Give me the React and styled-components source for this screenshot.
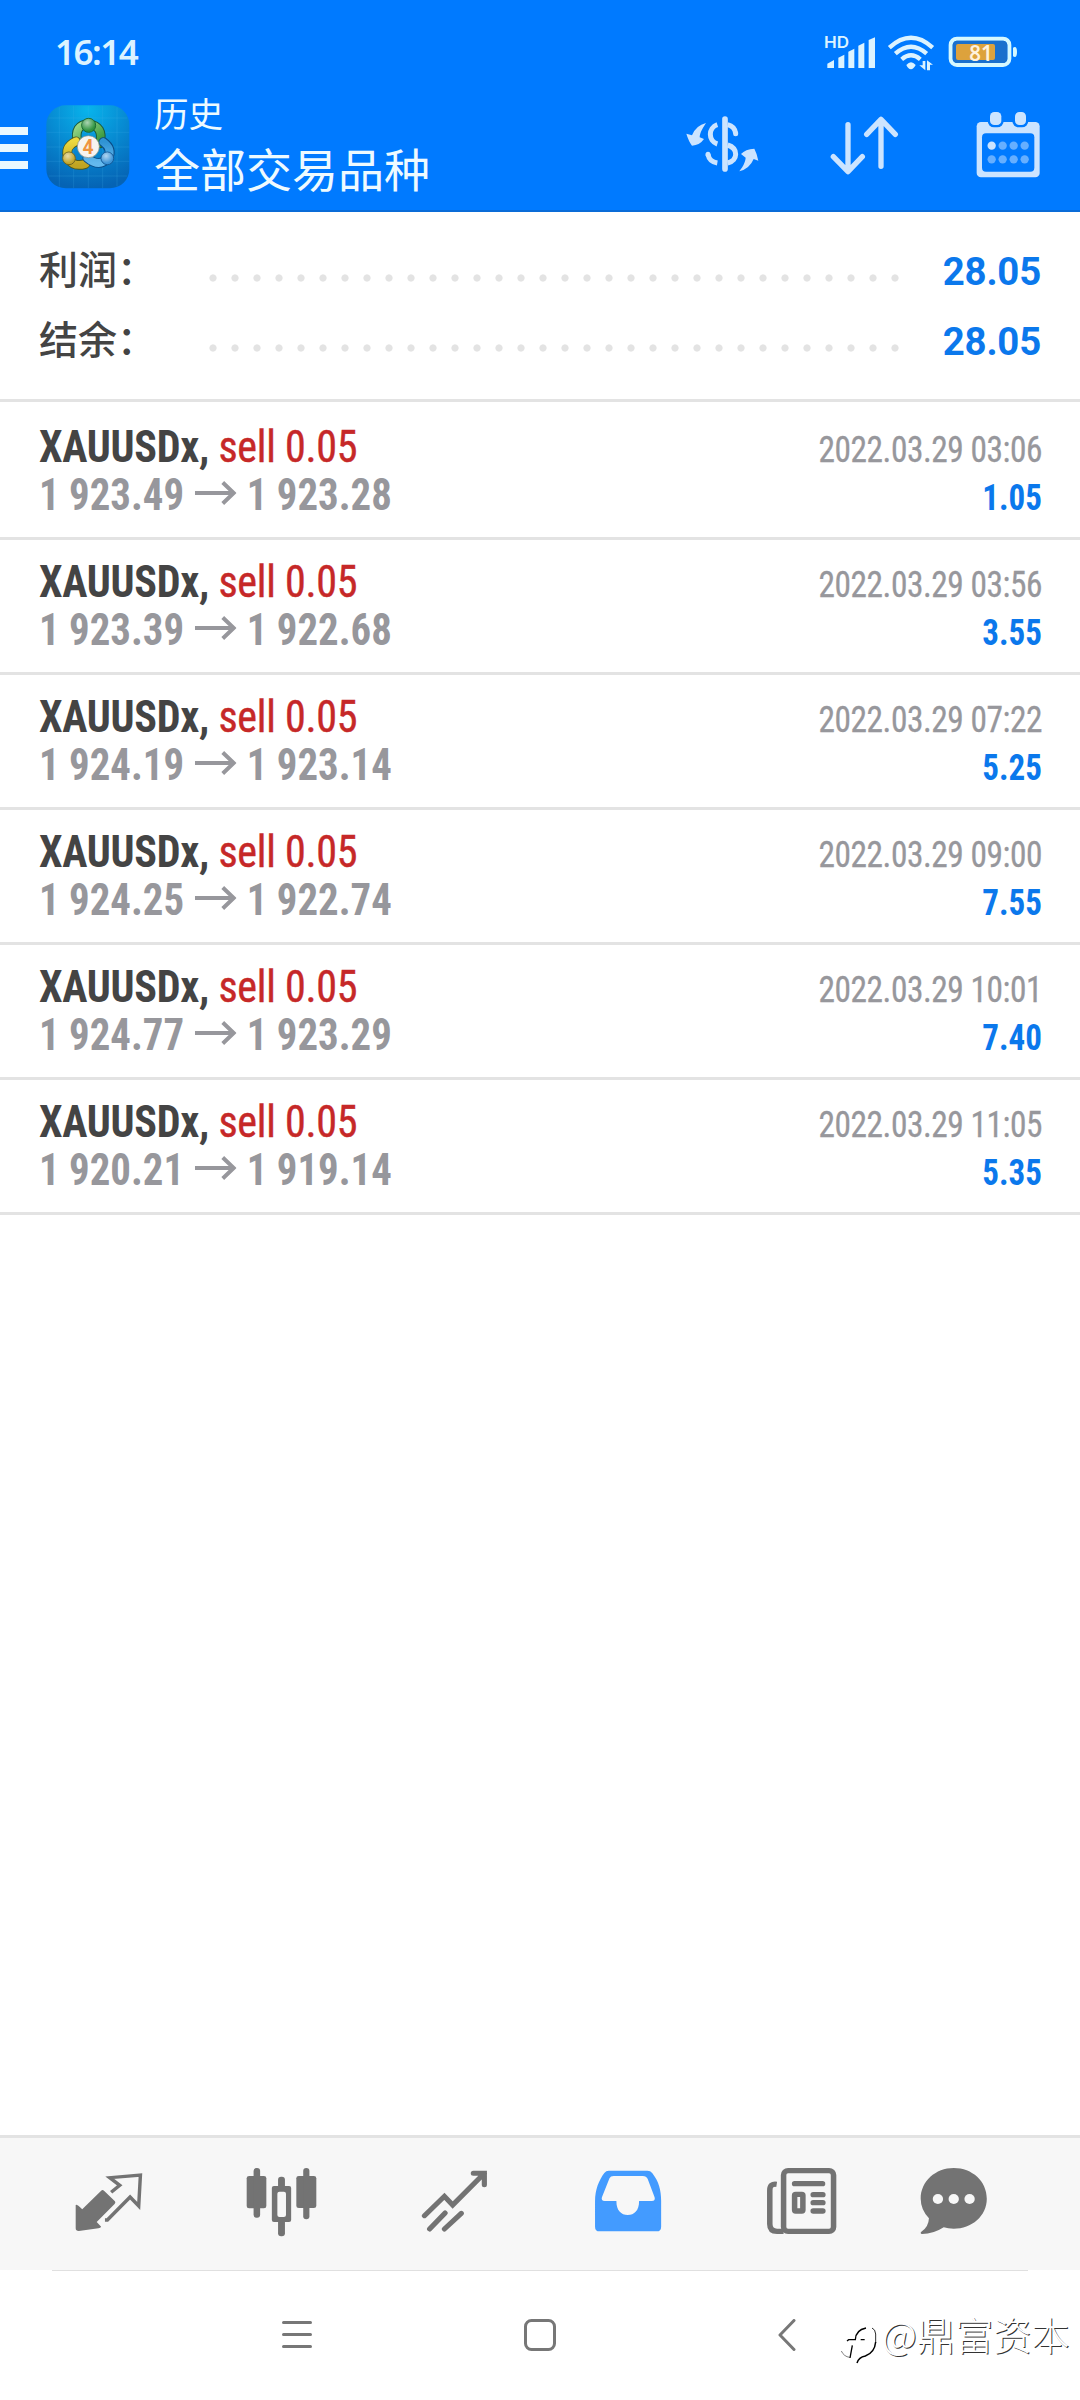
import React from 'react';
import styled, { createGlobalStyle } from 'styled-components';

const GlobalStyle = createGlobalStyle`
  * {
    box-sizing: border-box;
  }

  body {
    margin: 0;
    background: #fff;
    font-family: Roboto, 'Noto Sans CJK SC', sans-serif;
  }

  svg {
    display: block;
  }
`;

const Screen = styled.div`
  position: relative;
  display: flex;
  flex-direction: column;
  width: 1080px;
  height: 2400px;
  background: #fff;
  overflow: hidden;
`;

const Top = styled.header`
  height: 212px;
  background: #007aff;
  border-bottom: 2px solid #0a6cd8;
`;

const StatusBar = styled.div`
  display: flex;
  align-items: flex-start;
  justify-content: space-between;
  height: 94px;
  padding: 30px 62px 0 55px;
`;

const Clock = styled.span`
  color: #dcf3ff;
  font-family: 'Noto Sans', sans-serif;
  font-size: 35px;
  font-weight: 600;
  line-height: 44px;
  letter-spacing: -1.5px;
`;

const TitleBar = styled.div`
  display: flex;
  height: 116px;
`;

const MenuButton = styled.div`
  display: flex;
  flex-direction: column;
  gap: 9px;
  width: 28px;
  margin: 33px 18px 0 0;
`;

const MenuLine = styled.span`
  height: 8px;
  background: #e9f8ff;
`;

const Logo = styled.svg`
  width: 84px;
  height: 84px;
  margin-top: 10.5px;
`;

const Titles = styled.div`
  flex: 1;
  padding-left: 24px;
  color: #eefaff;
  white-space: nowrap;
`;

const Subtitle = styled.div`
  font-size: 34.6px;
  line-height: 42px;
`;

const PageTitle = styled.div`
  margin-top: 6px;
  font-size: 46px;
  line-height: 58px;
`;

const Actions = styled.div`
  display: flex;
  align-items: flex-start;
  padding: 21px 40px 0 0;
`;

const Summary = styled.section`
  height: 190px;
  padding: 25px 39px 0;
  border-bottom: 3px solid #e3e3e3;
`;

const SummaryRow = styled.div`
  display: flex;
  align-items: center;
  height: 70px;
`;

const SummaryLabel = styled.span`
  align-self: flex-start;
  width: 171px;
  color: #444;
  font-family: 'Noto Sans CJK SC', sans-serif;
  font-size: 39px;
  font-weight: 500;
  line-height: 61px;
`;

const Dots = styled.span`
  width: 704px;
  height: 8px;
  margin-top: 12px;
  margin-left: -8px;
  background: radial-gradient(circle at center, #e3e3e3 3.2px, transparent 4px) 0 0 / 22px 8px;
`;

const SummaryValue = styled.strong`
  flex: 1;
  margin-top: -2px;
  color: #0b78ec;
  font-size: 38.4px;
  font-weight: 700;
  letter-spacing: -0.2px;
  text-align: right;
`;

const Deals = styled.main`
  flex: 1;
  padding-top: 3px;
`;

const Deal = styled.article`
  display: flex;
  justify-content: space-between;
  height: 135px;
  padding: 18px 38px 0 39px;
  border-bottom: 3px solid #e3e3e3;
`;

const Column = styled.div`
  text-align: ${({ $end }) => ($end ? 'right' : 'left')};
`;

const Line = styled.div`
  height: 48px;
  font-family: 'Roboto Condensed', Roboto, sans-serif;
  font-stretch: 75%;
  font-size: 44px;
  line-height: 48px;
  white-space: pre;
  transform: scaleX(${({ $narrow }) => $narrow});
  transform-origin: ${({ $end }) => ($end ? 'right' : 'left')} center;
`;

const Symbol = styled.span`
  color: #444;
  font-weight: 700;
  letter-spacing: -0.3px;
`;

const Side = styled.span`
  color: #c62828;
  letter-spacing: -0.3px;
  -webkit-text-stroke: 0.4px #c62828;
`;

const Price = styled.span`
  color: #97979c;
  font-weight: 700;
`;

const Arrow = styled.svg`
  display: inline-block;
  width: 45px;
  height: 24px;
  margin: 0 10.5px 0 12px;
  vertical-align: 5px;
`;

const Time = styled.span`
  color: #97979c;
  font-size: 36.6px;
  letter-spacing: -0.5px;
  -webkit-text-stroke: 0.3px #97979c;
`;

const Profit = styled.span`
  color: #0b78ec;
  font-size: 36.6px;
  font-weight: 700;
`;

const Tabs = styled.nav`
  display: flex;
  height: 135px;
  padding-left: 75px;
  background: #f7f7f7;
  border-top: 3px solid #e3e3e3;
`;

const SystemBar = styled.div`
  display: flex;
  height: 130px;
  margin: 0 52px;
  padding-left: 230px;
  border-top: 1px solid #e0e0e0;
`;

const Glyph = styled.svg`
  flex: none;
  width: ${({ $w }) => $w}px;
  height: ${({ $h }) => $h}px;
  margin-top: ${({ $top = 0 }) => $top}px;
  margin-left: ${({ $left = 0 }) => $left}px;
`;

const Watermark = styled.div`
  position: absolute;
  left: 840px;
  top: 2304px;
  display: flex;
  gap: 4px;
  color: #fff;
  font-family: 'Noto Sans CJK SC', sans-serif;
  font-size: 38.2px;
  font-weight: 300;
  line-height: 60px;
  text-shadow: 1px 1px 0 #333;
  white-space: nowrap;
`;

const deals = [
  { open: '1 923.49', close: '1 923.28', time: '2022.03.29 03:06', profit: '1.05' },
  { open: '1 923.39', close: '1 922.68', time: '2022.03.29 03:56', profit: '3.55' },
  { open: '1 924.19', close: '1 923.14', time: '2022.03.29 07:22', profit: '5.25' },
  { open: '1 924.25', close: '1 922.74', time: '2022.03.29 09:00', profit: '7.55' },
  { open: '1 924.77', close: '1 923.29', time: '2022.03.29 10:01', profit: '7.40' },
  { open: '1 920.21', close: '1 919.14', time: '2022.03.29 11:05', profit: '5.35' },
];

const StatusIcons = () => (
  <Glyph $w={197} $h={46} $top={-4} viewBox="543 78 591 138">
    <g fill="#dcf3ff">
      <text x="552" y="144" fontFamily="Inter, sans-serif" fontSize="49" fontWeight="600" textLength="75" lengthAdjust="spacingAndGlyphs">HD</text>
      <path d="M562 191l20-11v24h-20zM595 173l18-9v40h-18zM625 155l18-9v58h-18zM655 137l18-9v76h-18zM686 120l19-8v92h-19z" />
      <path d="M799 195q14-17 28 0q-6 12-14 13q-9-1-14-13z" />
      <path d="M848 183h8v28l-18-15h10zM861 211h9v-17h9l-18-13z" />
    </g>
    <g fill="none" stroke="#dcf3ff" strokeWidth="13">
      <path d="M748 143q65-59 130 0M766 161q47-42 94 0M785 178q28-24 56 0" />
      <rect x="932" y="116" width="176" height="79" rx="19" stroke="#d5f8ff" strokeWidth="12" />
    </g>
    <rect x="938" y="122" width="164" height="67" rx="13" fill="#1a70cd" />
    <rect x="948" y="132" width="117" height="48" rx="6" fill="#dda23c" />
    <path d="M1119 143q12-7 12 13t-12 13z" fill="#d5f8ff" />
    <text x="988" y="182" fill="#fff1dc" fontFamily="'Noto Sans', sans-serif" fontSize="66" fontWeight="600" textLength="70" lengthAdjust="spacingAndGlyphs">81</text>
  </Glyph>
);

const AppLogo = () => (
  <Logo viewBox="138 313 252 252">
    <defs>
      <radialGradient id="tile" cx="50%" cy="5%" r="95%">
        <stop offset="0" stopColor="#08b4ec" />
        <stop offset="0.55" stopColor="#0786cf" />
        <stop offset="1" stopColor="#0563b4" />
      </radialGradient>
      <linearGradient id="green" x1="0" y1="0" x2="1" y2="1">
        <stop offset="0" stopColor="#9bd98a" />
        <stop offset="1" stopColor="#2f9238" />
      </linearGradient>
      <linearGradient id="yellow" x1="0" y1="0" x2="0" y2="1">
        <stop offset="0" stopColor="#ecd83e" />
        <stop offset="1" stopColor="#c0a422" />
      </linearGradient>
      <linearGradient id="blue" x1="0" y1="0" x2="0" y2="1">
        <stop offset="0" stopColor="#2f93d4" />
        <stop offset="1" stopColor="#63b9ee" />
      </linearGradient>
      <radialGradient id="shine" cx="40%" cy="30%" r="60%">
        <stop offset="0" stopColor="#fff" stopOpacity="0.6" />
        <stop offset="1" stopColor="#fff" stopOpacity="0" />
      </radialGradient>
    </defs>
    <rect x="139" y="314" width="249" height="249" rx="58" fill="url(#tile)" />
    <path d="M178 320V558M221 315V562M265 315V562M308 315V562M351 320V558M146 352H382M140 395H388M140 439H388M140 482H388M146 526H382" stroke="#46b4ea" strokeOpacity="0.3" strokeWidth="2" />
    <g strokeWidth="23" fill="none" strokeLinecap="round">
      <path d="M232 424Q222 372 265 370Q312 376 300 428" stroke="#1c5a3a" strokeWidth="29" />
      <path d="M232 424Q222 372 265 370Q312 376 300 428" stroke="url(#green)" />
      <path d="M228 422Q190 440 206 476Q222 500 256 490" stroke="#4d5a20" strokeWidth="29" />
      <path d="M228 422Q190 440 206 476Q222 500 256 490" stroke="url(#yellow)" />
      <path d="M310 424Q338 444 325 472Q298 502 262 472" stroke="#0b4c86" strokeWidth="29" />
      <path d="M310 424Q338 444 325 472Q298 502 262 472" stroke="url(#blue)" />
    </g>
    <circle cx="266" cy="374" r="21" fill="#2f9440" stroke="#1c6a34" strokeWidth="3" />
    <circle cx="207" cy="473" r="19" fill="#c3a62a" stroke="#6f6420" strokeWidth="3" />
    <circle cx="322" cy="473" r="19" fill="#3d95d8" stroke="#145a98" strokeWidth="3" />
    <circle cx="266" cy="374" r="20" fill="url(#shine)" />
    <circle cx="207" cy="473" r="18" fill="url(#shine)" />
    <circle cx="322" cy="473" r="18" fill="url(#shine)" />
    <circle cx="265" cy="438" r="33" fill="#f6f3f0" stroke="#7d8a80" strokeWidth="2" />
    <text x="264" y="459" textAnchor="middle" fontFamily="Roboto, sans-serif" fontSize="58" fontWeight="700" fill="#ef9440">4</text>
  </Logo>
);

const CurrencyIcon = () => (
  <Glyph $w={74} $h={58} viewBox="137 346 222 174">
    <g fill="none" stroke="#cce4ff" strokeWidth="15">
      <path d="M254 358V508" strokeWidth="17" strokeLinecap="round" />
      <path d="M231 375C203 384 203 424 231 433M203 464Q207 486 231 490" />
      <path d="M262 375Q283 380 286 401M262 436C294 446 294 482 262 490" />
      <path d="M203 464v1M286 401v1" strokeLinecap="round" />
    </g>
    <path d="M197 370C185 388 178 402 178 413L191 418Q178 437 155 438Q145 425 138 402L155 407Q167 377 197 370z" fill="#cce4ff" />
    <path d="M297 515C310 498 315 486 316 474L302 463Q315 448 342 447Q350 462 354 483L340 478Q328 507 297 515z" fill="#cce4ff" />
  </Glyph>
);

const SortIcon = () => (
  <Glyph $w={70} $h={60} $left={69} viewBox="569 345 210 180">
    <path d="M626 374V514M582 470L626 515L669 470M725 499V358M682 403L725 358L768 403" fill="none" stroke="#cce4ff" strokeWidth="16" strokeLinecap="round" strokeLinejoin="round" />
  </Glyph>
);

const CalendarIcon = () => (
  <Glyph $w={64} $h={67} $top={-4} $left={77} viewBox="1009 333 192 201">
    <rect x="1011" y="366" width="189" height="166" rx="13" fill="#cce4ff" />
    <rect x="1027" y="400" width="157" height="115" rx="12" fill="#007aff" />
    <rect x="1044" y="328" width="48" height="54" rx="19" fill="#007aff" />
    <rect x="1118" y="328" width="48" height="54" rx="19" fill="#007aff" />
    <rect x="1051" y="336" width="34" height="39" rx="13" fill="#cce4ff" />
    <rect x="1126" y="336" width="33" height="39" rx="13" fill="#cce4ff" />
    {[437, 478].map((y) => [1056, 1089, 1122, 1155].map((x) => (
      <circle key={`${x}-${y}`} cx={x} cy={y} r="12.5" fill={x === 1056 && y === 437 ? '#cce4ff' : '#66afff'} />
    )))}
  </Glyph>
);

const QuotesIcon = () => (
  <Glyph $w={68} $h={60} $top={34} viewBox="217 156 197.5 180" preserveAspectRatio="none">
    <path d="M219 255Q222 252 238 268L293 212Q297 208 302 213L333 244Q336 248 332 252L280 306L293 320Q291 324 285 325L228 333Q219 333 219 325z" fill="#737373" />
    <path d="M322 217L347 196L318 173L407 165L402 258L377 231L311 300L304 300" fill="none" stroke="#737373" strokeWidth="10" strokeLinejoin="miter" />
  </Glyph>
);

const ChartIcon = () => (
  <Glyph $w={71} $h={70} $top={29} $left={103} viewBox="713 141 206 210" preserveAspectRatio="none">
    <g fill="#737373">
      <rect x="715" y="168" width="57" height="97" rx="7" />
      <rect x="735" y="144" width="19" height="149" rx="9" />
      <rect x="859" y="168" width="58" height="96" rx="7" />
      <rect x="879" y="144" width="18" height="154" rx="9" />
      <rect x="806" y="170" width="20" height="179" rx="9" />
      <rect x="788" y="198" width="56" height="108" rx="6" />
    </g>
    <rect x="804" y="215" width="25" height="76" rx="6" fill="#f7f7f7" />
  </Glyph>
);

const TradeIcon = () => (
  <Glyph $w={68} $h={64} $top={31} $left={104} viewBox="1221 147 197.5 192" preserveAspectRatio="none">
    <path d="M1231 287L1289 229L1313 255L1405 160M1373 160H1405V194M1246 327L1291 279M1289 327L1338 280" fill="none" stroke="#737373" strokeWidth="15" strokeLinecap="round" />
  </Glyph>
);

const HistoryIcon = () => (
  <Glyph $w={68} $h={64} $top={31} $left={105} viewBox="155 147 197.5 192" preserveAspectRatio="none">
    <path fillRule="evenodd" d="M198 152H310Q319 152 324 159C343 184 350 210 350 243V320Q350 334 337 334H171Q158 334 158 320V243C158 210 169 181 185 159Q190 152 198 152zM212 168Q203 168 200 175L178 232Q175 243 186 243H220C220 272 234 285 253 285S286 272 286 243H323Q334 243 331 232L311 177Q307 168 297 168z" fill="#439bff" />
  </Glyph>
);

const NewsIcon = () => (
  <Glyph $w={71} $h={70} $top={29} $left={104} viewBox="655 141 206 210" preserveAspectRatio="none">
    <g fill="none" stroke="#737373">
      <rect x="706" y="152" width="145" height="182" rx="13" strokeWidth="16" />
      <path d="M686 193Q666 190 666 211V312Q666 334 687 334H706" strokeWidth="16" />
      <path d="M738 191H819M792 224H820M792 248H820M792 273H820" strokeWidth="16" strokeLinecap="round" />
      <rect x="738" y="223" width="24" height="50" rx="3" strokeWidth="16" />
    </g>
  </Glyph>
);

const ChatIcon = () => (
  <Glyph $w={68} $h={68} $top={29} $left={83} viewBox="1101 141 197.5 204" preserveAspectRatio="none">
    <path d="M1199 144C1253 144 1295 184 1295 236S1251 326 1199 326Q1182 326 1170 322Q1140 342 1107 342Q1101 341 1104 336Q1126 322 1127 295Q1103 268 1103 236C1103 184 1146 144 1199 144z" fill="#737373" />
    <g fill="#f7f7f7">
      <circle cx="1153" cy="237" r="15" />
      <circle cx="1199" cy="237" r="15" />
      <circle cx="1245" cy="237" r="15" />
    </g>
  </Glyph>
);

const WatermarkIcon = () => (
  <Glyph $w={38} $h={40} $top={22} viewBox="30 78 114 120">
    <g fill="none" stroke="#000">
      <path d="M34 153Q42 170 59 172" strokeWidth="1.5" />
      <path d="M60 174L67 136M51 123L56 119H76Q77 90 108 84M92 119H104" strokeWidth="4" />
      <path d="M126 84Q136 88 137 102V128" strokeWidth="2.5" />
      <path d="M137 126Q134 158 106 168Q86 172 81 189" strokeWidth="4.5" />
    </g>
  </Glyph>
);

const SummaryLine = ({ label, value }) => (
  <SummaryRow>
    <SummaryLabel>{label}</SummaryLabel>
    <Dots />
    <SummaryValue>{value}</SummaryValue>
  </SummaryRow>
);

const DealRow = ({ deal }) => (
  <Deal>
    <Column>
      <Line $narrow={0.957}>
        <Symbol>XAUUSDx, </Symbol>
        <Side>sell 0.05</Side>
      </Line>
      <Line $narrow={0.928}>
        <Price>{deal.open}</Price>
        <Arrow viewBox="0 0 42 24" preserveAspectRatio="none">
          <path d="M0 12H38M28 1.5L39 12L28 22.5" fill="none" stroke="#97979c" strokeWidth="4" />
        </Arrow>
        <Price>{deal.close}</Price>
      </Line>
    </Column>
    <Column $end>
      <Line $end $narrow={0.912}><Time>{deal.time}</Time></Line>
      <Line $end $narrow={0.903}><Profit>{deal.profit}</Profit></Line>
    </Column>
  </Deal>
);

const App = () => (
  <Screen>
    <GlobalStyle />
    <Top>
      <StatusBar>
        <Clock>16:14</Clock>
        <StatusIcons />
      </StatusBar>
      <TitleBar>
        <MenuButton>
          <MenuLine />
          <MenuLine />
          <MenuLine />
        </MenuButton>
        <AppLogo />
        <Titles>
          <Subtitle>历史</Subtitle>
          <PageTitle>全部交易品种</PageTitle>
        </Titles>
        <Actions>
          <CurrencyIcon />
          <SortIcon />
          <CalendarIcon />
        </Actions>
      </TitleBar>
    </Top>

    <Summary>
      <SummaryLine label="利润：" value="28.05" />
      <SummaryLine label="结余：" value="28.05" />
    </Summary>

    <Deals>
      {deals.map((deal) => <DealRow key={deal.time} deal={deal} />)}
    </Deals>

    <Tabs>
      <QuotesIcon />
      <ChartIcon />
      <TradeIcon />
      <HistoryIcon />
      <NewsIcon />
      <ChatIcon />
    </Tabs>

    <SystemBar>
      <Glyph $w={30} $h={30} $top={49} viewBox="0 0 30 30">
        <path d="M1.5 2.5H28.5M1.5 14.5H28.5M1.5 26.5H28.5" stroke="#777" strokeWidth="3" strokeLinecap="round" />
      </Glyph>
      <Glyph $w={32} $h={32} $top={48} $left={212} viewBox="0 0 32 32">
        <rect x="1.5" y="1.5" width="29" height="29" rx="6" fill="none" stroke="#777" strokeWidth="3" />
      </Glyph>
      <Glyph $w={18} $h={32} $top={48} $left={222} viewBox="0 0 18 32">
        <path d="M16 1.5L2 16L16 30.5" fill="none" stroke="#777" strokeWidth="3" strokeLinecap="round" strokeLinejoin="round" />
      </Glyph>
    </SystemBar>

    <Watermark>
      <WatermarkIcon />
      @鼎富资本
    </Watermark>
  </Screen>
);

export default App;
